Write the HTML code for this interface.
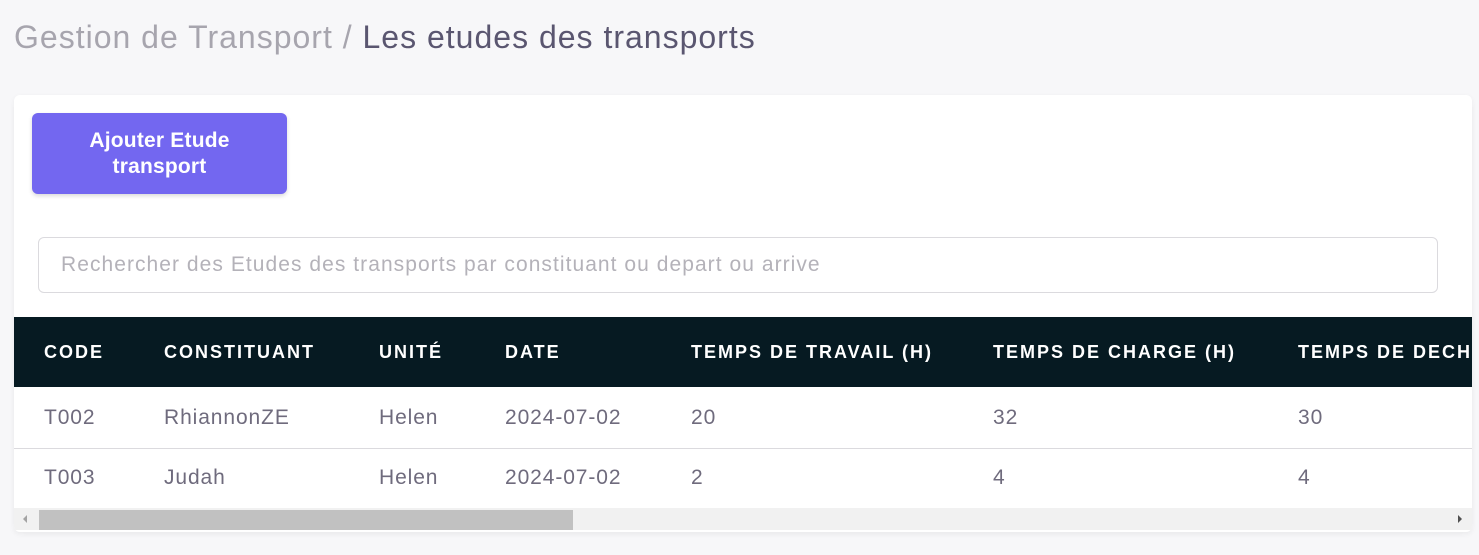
<!DOCTYPE html>
<html><head><style>
body{margin:0;width:1479px;height:555px;background:#f7f7f9;font-family:"Liberation Sans",sans-serif;position:relative;overflow:hidden}
.a{position:absolute;white-space:nowrap}
.bc{left:14px;top:19px;font-size:32px;color:#a7a5ae;letter-spacing:1px}
.bc b{font-weight:normal;color:#5a5670}
.card{left:14px;top:95px;width:1458px;height:437px;background:#fff;border-radius:6px;box-shadow:0 2px 6px rgba(0,0,0,.06);overflow:hidden}
.btn{left:18px;top:18px;width:255px;height:81px;background:#7367f0;border-radius:6px;color:#fff;font-weight:bold;font-size:21px;text-align:center;line-height:26px;padding-top:15px;box-sizing:border-box;box-shadow:0 2px 4px rgba(0,0,0,.15);letter-spacing:0.2px}
.in{left:24px;top:142px;width:1400px;height:56px;border:1px solid #dbdade;border-radius:6px;box-sizing:border-box;font-size:21px;color:#b4b2b9;padding:15px 22px;letter-spacing:1.05px}
.th{left:0;top:222px;width:1458px;height:70px;background:#061a22}
.h{color:#fff;font-weight:bold;font-size:18px;letter-spacing:2px;top:247px}
.c{color:#6f6b7d;font-size:21px;letter-spacing:0.9px}
.r1{top:311px}.r2{top:371px}
.ln{left:0;width:1458px;height:1px;background:#dbdade}
.sb{left:0;top:413px;width:1458px;height:22px;background:#f1f1f1}
.th2{left:25px;top:415px;width:534px;height:20px;background:#c1c1c1}
</style></head><body>
<div class="a bc">Gestion de Transport / <b>Les etudes des transports</b></div>
<div class="a card">
<div class="a btn">Ajouter Etude<br>transport</div>
<div class="a in">Rechercher des Etudes des transports par constituant ou depart ou arrive</div>
<div class="a th"></div>
<div class="a h" style="left:30px">CODE</div>
<div class="a h" style="left:150px">CONSTITUANT</div>
<div class="a h" style="left:365px">UNITÉ</div>
<div class="a h" style="left:491px">DATE</div>
<div class="a h" style="left:677px">TEMPS DE TRAVAIL (H)</div>
<div class="a h" style="left:979px">TEMPS DE CHARGE (H)</div>
<div class="a h" style="left:1284px">TEMPS DE DECHARGE (H)</div>
<div class="a c r1" style="left:30px">T002</div>
<div class="a c r1" style="left:150px">RhiannonZE</div>
<div class="a c r1" style="left:365px">Helen</div>
<div class="a c r1" style="left:491px">2024-07-02</div>
<div class="a c r1" style="left:677px">20</div>
<div class="a c r1" style="left:979px">32</div>
<div class="a c r1" style="left:1284px">30</div>
<div class="a ln" style="top:353px"></div>
<div class="a c r2" style="left:30px">T003</div>
<div class="a c r2" style="left:150px">Judah</div>
<div class="a c r2" style="left:365px">Helen</div>
<div class="a c r2" style="left:491px">2024-07-02</div>
<div class="a c r2" style="left:677px">2</div>
<div class="a c r2" style="left:979px">4</div>
<div class="a c r2" style="left:1284px">4</div>
<div class="a sb"></div>
<div class="a th2"></div>
<div class="a" style="left:9px;top:420px;width:0;height:0;border-top:4px solid transparent;border-bottom:4px solid transparent;border-right:4px solid #a3a3a3"></div>
<div class="a" style="left:1444px;top:420px;width:0;height:0;border-top:4px solid transparent;border-bottom:4px solid transparent;border-left:4px solid #505050"></div>
</div>
</body></html>
